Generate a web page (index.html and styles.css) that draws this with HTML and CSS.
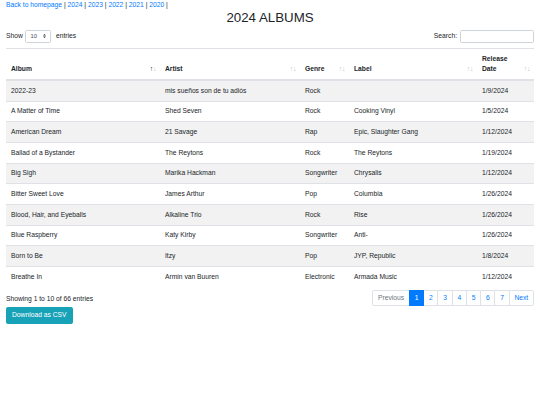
FILE: index.html
```html
<!DOCTYPE html>
<html lang="en">
<head>
    <meta charset="UTF-8">
    <meta name="viewport" content="width=device-width, initial-scale=1.0">
    <title>2024 Albums</title>
    <link rel="stylesheet" href="styles.css">
</head>
<body>
    <div class="container">
        <div class="nav-links">
            <a href="#">Back to homepage</a> | <a href="#">2024</a> | <a href="#">2023</a> | <a href="#">2022</a> | <a href="#">2021</a> | <a href="#">2020</a> |
        </div>
        <h1>2024 ALBUMS</h1>

        <div class="table-controls">
            <label class="length">Show
                <select class="select-sm">
                    <option>10</option>
                    <option>25</option>
                    <option>50</option>
                    <option>100</option>
                </select>
                entries</label>
            <label class="filter">Search:<input type="search" class="input-sm"></label>
        </div>

        <table class="albums">
            <colgroup>
                <col class="c-album">
                <col class="c-artist">
                <col class="c-genre">
                <col class="c-label">
                <col class="c-date">
            </colgroup>
            <thead>
                <tr>
                    <th class="sorting asc">Album</th>
                    <th class="sorting">Artist</th>
                    <th class="sorting">Genre</th>
                    <th class="sorting">Label</th>
                    <th class="sorting">Release Date</th>
                </tr>
            </thead>
            <tbody>
                <tr><td>2022-23</td><td>mis sueños son de tu adiós</td><td>Rock</td><td></td><td>1/9/2024</td></tr>
                <tr><td>A Matter of Time</td><td>Shed Seven</td><td>Rock</td><td>Cooking Vinyl</td><td>1/5/2024</td></tr>
                <tr><td>American Dream</td><td>21 Savage</td><td>Rap</td><td>Epic, Slaughter Gang</td><td>1/12/2024</td></tr>
                <tr><td>Ballad of a Bystander</td><td>The Reytons</td><td>Rock</td><td>The Reytons</td><td>1/19/2024</td></tr>
                <tr><td>Big Sigh</td><td>Marika Hackman</td><td>Songwriter</td><td>Chrysalis</td><td>1/12/2024</td></tr>
                <tr><td>Bitter Sweet Love</td><td>James Arthur</td><td>Pop</td><td>Columbia</td><td>1/26/2024</td></tr>
                <tr><td>Blood, Hair, and Eyeballs</td><td>Alkaline Trio</td><td>Rock</td><td>Rise</td><td>1/26/2024</td></tr>
                <tr><td>Blue Raspberry</td><td>Katy Kirby</td><td>Songwriter</td><td>Anti-</td><td>1/26/2024</td></tr>
                <tr><td>Born to Be</td><td>Itzy</td><td>Pop</td><td>JYP, Republic</td><td>1/8/2024</td></tr>
                <tr><td>Breathe In</td><td>Armin van Buuren</td><td>Electronic</td><td>Armada Music</td><td>1/12/2024</td></tr>
            </tbody>
        </table>

        <div class="table-footer">
            <div class="info">Showing 1 to 10 of 66 entries</div>
            <ul class="pagination">
                <li class="page-item disabled"><a href="#" class="page-link">Previous</a></li>
                <li class="page-item active"><a href="#" class="page-link">1</a></li>
                <li class="page-item"><a href="#" class="page-link">2</a></li>
                <li class="page-item"><a href="#" class="page-link">3</a></li>
                <li class="page-item"><a href="#" class="page-link">4</a></li>
                <li class="page-item"><a href="#" class="page-link">5</a></li>
                <li class="page-item"><a href="#" class="page-link">6</a></li>
                <li class="page-item"><a href="#" class="page-link">7</a></li>
                <li class="page-item"><a href="#" class="page-link">Next</a></li>
            </ul>
        </div>

        <button type="button" class="btn-csv">Download as CSV</button>
    </div>
</body>
</html>
```

FILE: styles.css
```css
/* Base */
body {
    margin: 0;
    font-family: "Liberation Sans", Arial, sans-serif;
    font-size: 6.72px;
    line-height: 10px;
    color: #212529;
    background-color: #fff;
}

a {
    color: #007bff;
    text-decoration: none;
}

.container {
    padding: 0 6px;
}

h1 {
    margin: 0 0 3.4px;
    font-size: 13.3px;
    font-weight: 500;
    line-height: 16px;
    text-align: center;
}

/* Show entries / Search */
.table-controls {
    display: flex;
    justify-content: space-between;
    align-items: center;
    height: 13.4px;
}

.table-controls label {
    display: flex;
    align-items: center;
    font-weight: normal;
}

.select-sm {
    -webkit-appearance: none;
    appearance: none;
    width: 26px;
    height: 13px;
    margin: 0 4.5px 0 2.6px;
    padding: 0 8px 0 4px;
    font-family: inherit;
    font-size: 5.9px;
    color: #495057;
    border: 1px solid #ced4da;
    border-radius: 1.4px;
    background: #fff url("data:image/svg+xml,%3csvg xmlns='http://www.w3.org/2000/svg' width='4' height='5' viewBox='0 0 4 5'%3e%3cpath fill='%23343a40' d='M2 0L0 2h4zm0 5L0 3h4z'/%3e%3c/svg%3e") no-repeat right 4px center / 3.4px 4.2px;
}

.input-sm {
    width: 74px;
    height: 13px;
    margin-left: 3px;
    padding: 0 3px;
    font-size: 5.9px;
    border: 1px solid #ced4da;
    border-radius: 1.4px;
    box-sizing: border-box;
}

/* Table */
.albums {
    width: 100%;
    margin-top: 5.6px;
    border-collapse: collapse;
    table-layout: fixed;
}

.c-album { width: 154px; }
.c-artist { width: 140px; }
.c-genre { width: 49px; }
.c-label { width: 128px; }
.c-date { width: 57px; }

.albums th,
.albums td {
    padding: 4.8px 5px;
    text-align: left;
    border-top: 1px solid #dee2e6;
}

.albums th {
    padding-right: 12.6px;
    vertical-align: bottom;
    border-bottom: 2px solid #dee2e6;
    font-weight: bold;
}

.albums td {
    vertical-align: top;
    padding-top: 4.83px;
    padding-bottom: 4.83px;
}

.albums tbody tr:nth-of-type(odd) {
    background-color: rgba(0, 0, 0, 0.05);
}

/* Sort arrows */
.sorting {
    position: relative;
}

.sorting::before,
.sorting::after {
    position: absolute;
    bottom: 5px;
    font-weight: normal;
    opacity: 0.3;
}

.sorting::before {
    content: "\2191";
    right: 7px;
}

.sorting::after {
    content: "\2193";
    right: 3.6px;
}

.sorting.asc::before {
    opacity: 1;
}

/* Info + pagination */
.table-footer {
    display: flex;
    justify-content: space-between;
    align-items: flex-start;
    margin-top: 3px;
}

.info {
    padding-top: 4px;
}

.pagination {
    display: flex;
    margin: 0;
    padding: 0;
    list-style: none;
}

.page-link {
    display: block;
    margin-left: -1px;
    padding: 3px 4.75px;
    line-height: 8.4px;
    color: #007bff;
    border: 1px solid #dee2e6;
    background-color: #fff;
}

.page-item:first-child .page-link {
    margin-left: 0;
    border-radius: 1.7px 0 0 1.7px;
}

.page-item:last-child .page-link {
    border-radius: 0 1.7px 1.7px 0;
}

.page-item.disabled .page-link {
    color: #6c757d;
}

.page-item.active .page-link {
    position: relative;
    color: #fff;
    background-color: #007bff;
    border-color: #007bff;
}

/* CSV button */
.btn-csv {
    display: block;
    margin-top: 1px;
    padding: 2.5px 5px;
    font-family: inherit;
    font-size: 6.72px;
    line-height: 10px;
    color: #fff;
    background-color: #17a2b8;
    border: 1px solid #17a2b8;
    border-radius: 1.7px;
    cursor: pointer;
}

.btn-csv:hover {
    background-color: #138496;
}
```
